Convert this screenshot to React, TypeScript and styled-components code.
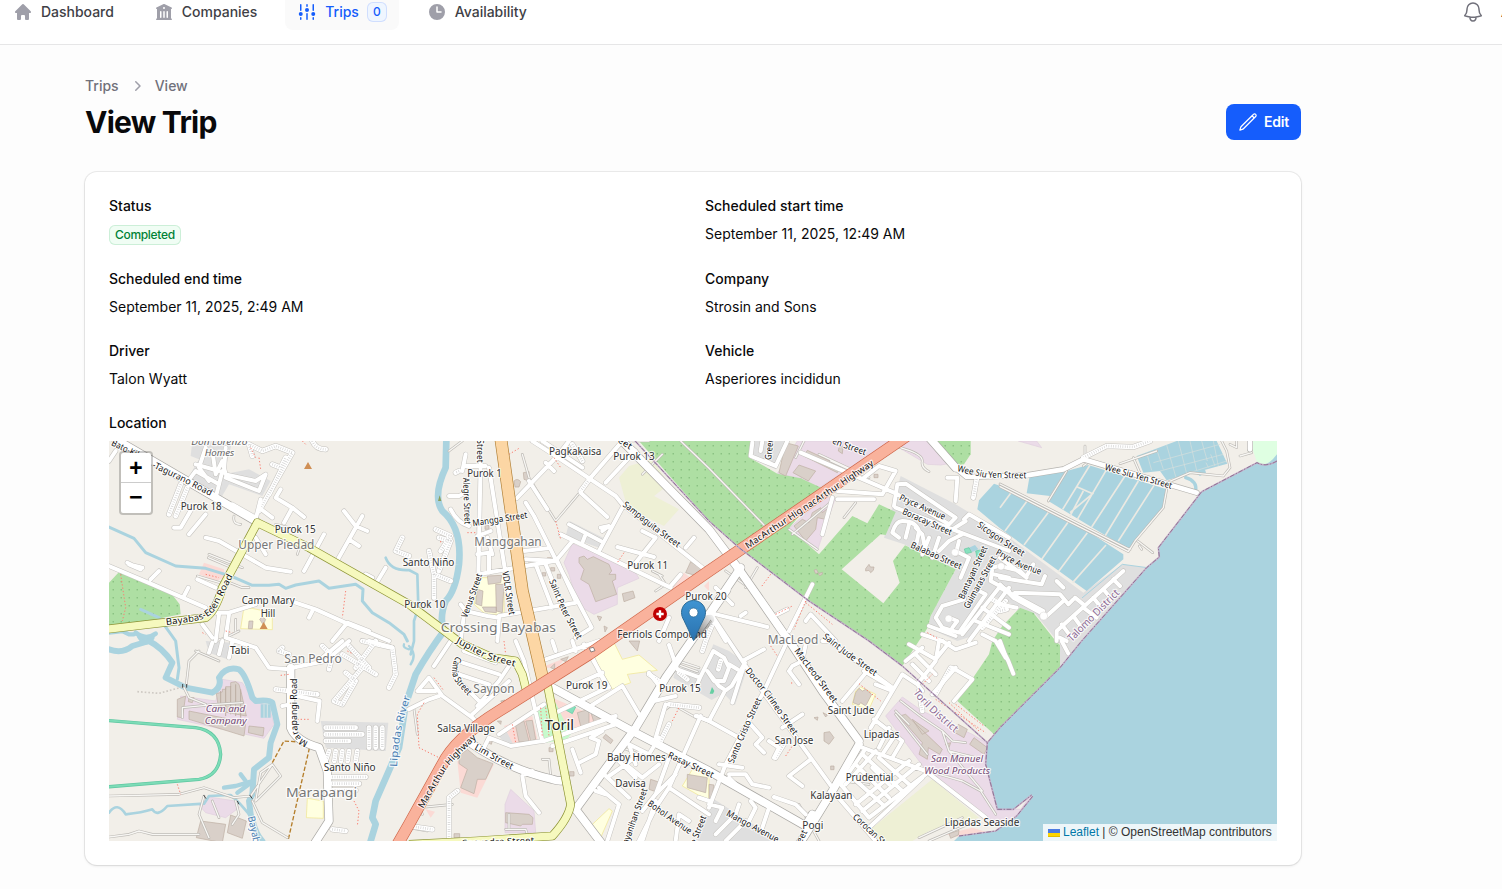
import React from 'react';
import styled, { createGlobalStyle } from 'styled-components';
import {
  HiMiniHome,
  HiMiniBuildingLibrary,
  HiMiniAdjustmentsVertical,
  HiMiniClock,
  HiMiniChevronRight,
  HiOutlineBell,
  HiOutlinePencil,
} from 'react-icons/hi2';

const GlobalStyle = createGlobalStyle`
  * { box-sizing: border-box; }
  body {
    margin: 0;
    background: #fdfdfd;
    font-family: Inter, "Liberation Sans", sans-serif;
    font-size: 14px;
    line-height: 20px;
    color: #09090b;
    overflow: hidden;
  }
`;

const Page = styled.div`
  height: 889px;
  width: 1502px;
  overflow: hidden;
`;

const Topbar = styled.header`
  height: 45px;
  display: flex;
  justify-content: space-between;
  align-items: flex-start;
  background: #fff;
  border-bottom: 1px solid #e6e6e7;
  overflow: hidden;
`;

const Nav = styled.nav`
  display: flex;
  gap: 16px;
  margin: -6px 0 0 1px;
`;

const NavItem = styled.a<{ $active?: boolean }>`
  display: flex;
  align-items: center;
  gap: 8px;
  height: 36px;
  padding: 0 12px;
  border-radius: 8px;
  font-weight: 500;
  letter-spacing: -0.02px;
  white-space: nowrap;
  color: ${(p) => (p.$active ? '#155dfc' : '#3f3f46')};
  background: ${(p) => (p.$active ? '#fafafa' : 'transparent')};
  svg {
    width: 20px;
    height: 20px;
    flex: none;
    color: ${(p) => (p.$active ? '#155dfc' : '#9f9fa9')};
  }
`;

const CountBadge = styled.span`
  width: 20px;
  height: 20px;
  display: flex;
  align-items: center;
  justify-content: center;
  border-radius: 6px;
  font-size: 12px;
  background: #eff6ff;
  box-shadow: inset 0 0 0 1px #d0defe;
`;

const TopbarEnd = styled.div`
  display: flex;
  align-items: center;
  height: 24px;
  width: 41px;
  gap: 16px;
  flex: none;
  overflow: hidden;
  svg {
    width: 24px;
    height: 24px;
    flex: none;
    color: #71717b;
    stroke-width: 1.5;
  }
`;

const Main = styled.main`
  width: 1216px;
  margin: 0 0 0 85px;
  padding-top: 31px;
`;

const Breadcrumbs = styled.div`
  display: flex;
  align-items: center;
  gap: 8px;
  height: 20px;
  font-weight: 500;
  color: #71717b;
  svg {
    width: 20px;
    height: 20px;
    color: #9f9fa9;
  }
`;

const TitleRow = styled.div`
  display: flex;
  align-items: center;
  justify-content: space-between;
  margin-top: 8px;
  height: 36px;
`;

const Title = styled.h1`
  margin: 0;
  font-size: 30px;
  line-height: 36px;
  font-weight: 700;
  letter-spacing: -0.75px;
`;

const EditButton = styled.button`
  display: flex;
  align-items: center;
  gap: 6px;
  width: 75px;
  height: 36px;
  padding: 0 12px;
  border: 0;
  border-radius: 8px;
  background: #155dfc;
  color: #fff;
  font: 600 14px/20px Inter, sans-serif;
  letter-spacing: -0.2px;
  svg {
    width: 20px;
    height: 20px;
    flex: none;
  }
`;

const Card = styled.section`
  margin-top: 32px;
  height: 693px;
  padding: 24px;
  border-radius: 12px;
  background: #fff;
  box-shadow: 0 0 0 1px rgba(9, 9, 11, 0.07), 0 1px 3px rgba(0, 0, 0, 0.1);
`;

const Fields = styled.div`
  display: grid;
  grid-template-columns: 1fr 1fr;
  grid-template-rows: 49px 48px 48px;
  column-gap: 24px;
  row-gap: 24px;
`;

const FieldLabel = styled.div`
  font-weight: 500;
  height: 20px;
`;

const FieldValue = styled.div`
  display: flex;
  align-items: center;
  height: 20px;
  margin-top: 8px;
`;

const StatusBadge = styled.span`
  height: 20px;
  padding: 0 6px;
  margin-top: 2px;
  border-radius: 6px;
  font-size: 12px;
  font-weight: 500;
  letter-spacing: -0.32px;
  color: #008236;
  background: #f0fdf4;
  box-shadow: inset 0 0 0 1px #ccefd8;
`;

const LocationField = styled.div`
  margin-top: 24px;
`;

const MapFrame = styled.div`
  position: relative;
  height: 400px;
  margin-top: 8px;
  overflow: hidden;
  background: #f2efe9;
`;

const MapSvg = styled.svg`
  display: block;
  width: 1168px;
  height: 400px;
  text {
    font-family: "Noto Sans", sans-serif;
    paint-order: stroke;
    stroke: rgba(255, 255, 255, 0.75);
    stroke-width: 7px;
    stroke-linejoin: round;
  }
`;

const ZoomControl = styled.div`
  position: absolute;
  left: 10px;
  top: 10px;
  width: 34px;
  border: 2px solid rgba(0, 0, 0, 0.2);
  border-radius: 4px;
  background: #fff;
  background-clip: padding-box;
`;

const ZoomButton = styled.div`
  height: 29px;
  text-align: center;
  font: bold 23px/35px "Liberation Mono", monospace;
  color: #000;
  & + & {
    border-top: 1px solid #ccc;
    height: 31px;
    line-height: 33px;
  }
`;

const Pin = styled.svg`
  position: absolute;
  left: 572px;
  top: 159px;
  width: 41px;
  height: 41px;
`;

const Attribution = styled.div`
  position: absolute;
  right: 0;
  bottom: 0;
  display: flex;
  align-items: center;
  height: 17px;
  width: 234px;
  padding: 0 5px;
  white-space: pre;
  background: rgba(255, 255, 255, 0.8);
  color: #333;
  font: 12px/17px "Liberation Sans", sans-serif;
  svg {
    width: 12px;
    height: 8px;
    margin-right: 3px;
    flex: none;
  }
  a {
    color: #0078a8;
  }
`;

/* The map is drawn in sheets; each sheet has its own origin in map units. */
type Sheet = 'A' | 'B' | 'C' | 'D' | 'E' | 'F' | 'G' | 'H';
const origin: Record<Sheet, [number, number]> = {
  A: [0, 0], B: [900, 0], C: [1800, 0], D: [2673, 0],
  E: [0, 600], F: [900, 600], G: [1800, 600], H: [2673, 600],
};
const at = (s: Sheet) => `translate(${origin[s][0]} ${origin[s][1]})`;
type Piece = [Sheet, string];

const residential: Piece[] = [
  ['C', 'M575 105L740 190L873 270L1123 455L1240 370L1313 380L1118 600L1053 680V610L980 520L933 500L850 465L790 585L745 600L655 560L665 525L740 385L585 310L525 290Z'],
  ['A', 'M250 0H370L345 100L420 85L485 120L460 165L360 130L325 190L235 115L270 55L245 45Z'],
  ['B', 'M482 240L582 290L575 322L470 285Z'],
  ['G', 'M-97 78L-17 87L13 10L60 30L118 72L78 192L43 157L8 177L-107 110Z'],
  ['G', 'M0 465L210 600H0Z'],
  ['E', 'M635 240L838 245L830 330L650 320Z'],
  ['C', 'M130 0H240L200 85L118 48Z'],
  ['F', 'M290 265L315 310L290 308L268 285ZM880 540L900 510V600H860Z'],
  ['E', 'M290 0L370 5L355 55L300 35Z'],
];
const industrial: Piece[] = [
  ['B', 'M490 308L670 380L690 412L625 440V490L555 520L520 500L495 450L480 400L465 365Z'],
  ['C', 'M265 0H550L330 140L275 112L205 98ZM590 0H655L735 65L695 72L655 70L570 20ZM240 262L350 165L378 175L325 328Z'],
  ['E', 'M340 115L400 125L435 180L480 195L495 250L465 292L205 235L215 165L320 180ZM270 492L300 468L380 480L390 500L350 530L290 515Z'],
  ['F', 'M288 490L305 445L375 510L380 575H288Z'],
  ['G', 'M580 168L640 210L790 280L840 310L830 370L865 505L935 505L965 462L972 466L920 530L895 558L820 530L660 400L530 225Z'],
  ['D', 'M55 0H110L125 20Z'],
];
const forest: Piece[] = [
  ['C', 'M-210 0H125L118 48L205 98L275 112L340 142L240 262L330 340L430 225L475 247L510 190L560 213L530 282L515 280L398 385L523 487L572 425L552 360L588 313L740 385L665 525L655 562L580 675L480 600L300 480L90 320L0 240Z'],
  ['C', 'M675 0H785V40L765 70L740 75Z'],
  ['C', 'M933 500L973 515L1040 600L1053 612V680L855 880L745 780L840 640L850 600L880 555Z'],
  ['A', 'M30 393L185 455L212 490L215 520L140 535L0 578V425Z'],
];
const farmland: Piece[] = [
  ['B', 'M660 75L730 55L780 130L735 165L810 205L765 255L655 200L630 110Z'],
  ['G', 'M670 415L810 530L660 570L610 600H510L485 565Z'],
];
const school: Piece[] = [
  ['A', 'M405 497L490 515V566L395 563Z'],
  ['B', 'M215 410H285V520H230L195 490Z'],
  ['E', 'M595 472L643 480V532L592 530Z'],
  ['F', 'M555 50L615 5L640 55L690 42L745 88L655 100L665 125L610 145ZM545 555L600 503L610 510L575 590ZM820 435L850 385L900 400V480Z'],
  ['G', 'M440 150L455 138L500 160L480 205L430 190Z'],
];
const retail: Piece[] = [
  ['A', 'M285 365L345 385V410L320 420L270 400Z'],
  ['B', 'M785 445L825 395L850 415L800 445ZM885 435L900 420V450Z'],
  ['F', 'M285 255L370 225L388 308H312L300 285ZM430 170L580 235L480 280ZM395 80L470 50L445 80ZM145 360L255 370L205 470L155 455ZM50 505L78 512L65 530Z'],
  ['G', 'M710 580L790 560L840 575L770 592Z'],
];
const buildings: Piece[] = [
  ['A', 'M420 540H432L430 563H418ZM452 535L460 528L470 535L463 552Z'],
  ['B', 'M510 350L525 345L535 355L553 347L600 370L608 390L600 400H620V415L610 420L623 460L560 482L540 430L515 415L525 385L510 365ZM640 458L672 450L678 470L645 482ZM845 362L880 385L865 405L830 395ZM315 120Q325 110 335 122L330 138H318ZM343 95L360 92V120L345 115ZM235 405L278 403L275 425L238 430ZM205 445L222 450L218 495L200 488ZM260 430H285L280 515L262 510ZM220 498H262V515L228 512ZM205 260H217V268H205ZM228 253H240V265H228ZM357 352H367V363H357ZM382 358H394V369H382ZM415 350H427V361H415ZM425 380H437V390H425ZM400 395H410V405H400ZM445 400H455V412H445ZM565 525L578 528L572 540ZM585 555L595 560L588 573Z'],
  ['C', 'M230 5L268 15L230 105L210 95ZM295 28L395 75L385 95L285 45ZM270 72L320 90L298 120L252 95ZM255 255L280 235L300 245L310 215L335 200L340 215L365 195L350 235L325 230L320 265L290 300ZM390 20L402 15L400 38L388 30ZM495 100H507V110H495ZM470 383L480 370L484 378L495 378L493 388L485 395L480 388L470 390ZM315 388L322 385L328 395L320 398ZM328 398L340 394V400L332 404ZM87 402L98 402L95 415Z'],
  ['E', 'M205 175L230 165L220 230L205 228ZM322 158L340 153V145H350V137H365V125L380 122L390 130L398 160L412 225L330 210ZM240 210L350 232L410 248L405 285L340 265L240 235ZM420 255L465 260L462 285L418 275ZM275 540L350 550L340 605L262 590ZM365 522L412 540L400 592L355 575ZM240 170H255L250 185L238 182Z'],
  ['F', 'M150 345L175 325L205 350L252 368L230 415H205L195 458L155 440L175 385L150 368ZM290 515L360 520L372 530L370 550H340L335 555L290 545ZM320 255L345 240L360 300L330 303ZM350 240L370 238L380 295L365 300ZM505 215L540 205V250L515 255ZM545 212L575 235L555 245ZM725 415L755 425L748 455L720 445ZM835 400L895 410L890 455L835 440ZM590 280L612 298L605 308L582 290ZM275 180L288 177L287 192ZM425 80L437 68V85ZM455 55L478 47L470 62ZM265 240H277L275 250ZM233 290L250 300L247 310L228 300ZM135 578H152V590H135ZM420 320H432V332H420ZM482 392H495V405H482ZM660 0H692L685 30Z'],
  ['G', 'M570 225L590 220L700 325L692 340L658 320L655 355L630 340L640 305ZM610 235L660 270L640 280ZM748 250L775 265L765 290L738 275ZM795 290L835 320L825 340L782 310ZM345 275L362 272L375 290L360 310L345 300ZM315 230L327 228L325 238ZM342 215L355 222L350 228ZM365 375H375V386H365ZM440 155L450 142L460 150L470 145L488 160L470 195L455 185L450 192L432 185ZM0 430L15 432L8 470L0 475ZM708 310L725 305L720 320ZM720 578L750 568L748 582L725 592Z'],
];
const ponds = 'M-18 128L30 145L270 275L370 340V355L260 450L0 262L-68 205L-63 178ZM90 98L195 92L150 165L80 157ZM200 90L265 72L500 145L490 200L385 325L145 180ZM410 45L530 0H650L682 68L500 118L480 90L430 95ZM570 85L610 68L618 95L600 105Z';
const pondLines = 'M37 150L0 200M85 175L15 270M148 210L72 312M205 242L125 355M262 275L175 392M318 312L218 425M270 72L188 205M232 138L278 158L210 215M320 85L232 235M250 150L210 225M375 105L275 258M415 120L315 285M462 133L355 300';
const pondLinesFine = 'M440 35L455 88M470 25L490 85M500 12L528 110M535 0L560 98M570 0L590 88M605 0L622 60M640 0L655 75M460 65L660 10M480 90L670 40M560 98L680 60M632 40L645 75M618 65L625 80';

const rivers: { d: string; w: number }[] = [
  { d: 'M0 258L75 292L110 335L200 375L290 382L370 407L430 433H480L510 430L530 442L560 432L630 420L660 442L740 430L762 445L760 480L790 515L840 545L885 580L895 600', w: 9 },
  { d: 'M830 350Q845 390 900 387L925 400L928 500L915 540V600L905 640', w: 8 },
  { d: 'M95 505L150 530L200 600L210 680L205 715', w: 9 },
  { d: 'M0 575L40 570L60 580H75', w: 13 },
  { d: 'M80 575Q110 600 140 578M90 585Q110 620 130 590', w: 14 },
  { d: 'M0 625Q40 640 70 615L120 600Q160 620 190 665L170 710L230 740L310 755Q340 740 330 710Q350 675 390 685Q410 700 430 770L440 780Q480 775 490 785L505 850L485 905L480 950L435 985L430 1060L420 1080L425 1120L430 1135Q440 1180 460 1200', w: 18 },
  { d: 'M0 1115Q25 1080 50 1120Q100 1115 130 1105Q145 1130 175 1095L285 1088L300 1065L365 1062L390 1085L425 1125', w: 8 },
  { d: 'M395 1000L410 1020M345 1040L380 1035L425 1022M385 1055L420 1030', w: 13 },
  { d: 'M1012 0L1010 80Q970 165 1000 210Q1060 260 1050 370Q1040 450 1010 480Q990 530 1005 570Q960 630 920 700L890 790L870 920L800 1080L790 1130L800 1150L785 1200', w: 20 },
  { d: 'M900 615Q925 640 905 670M885 610Q880 620 900 625', w: 7 },
  { d: 'M3230 110Q3265 120 3260 150', w: 10 },
  { d: 'M3115 380L3040 370L2920 470', w: 3 },
];

const thin: Piece[] = [
  ['A', 'M300 340L400 380M298 350L380 385M375 225Q370 250 395 250M265 405L350 430M350 420L400 440L420 440M380 535V570M390 570L350 590L320 600M565 340L575 310M540 260L500 250'],
  ['B', 'M340 40L360 110L415 200L440 240L512 155M640 0L720 0M700 100L760 40M750 400L770 430L740 450M730 390L760 405M160 0L120 30'],
  ['C', 'M-85 0L0 82L165 252M260 50L285 0M365 60L430 90M330 40L480 110M240 265L325 325M250 280L370 180M405 230L440 185M590 25Q640 40 640 60Q635 80 660 92M560 15L590 25M50 390L120 440M110 440L145 380'],
  ['D', 'M0 137L385 332L405 300L490 200L500 145M0 129L390 326M145 180L200 90M360 68L470 30M400 50L430 120M255 15V50M500 125L570 95L670 105L690 80L680 30L665 0M690 10L710 20V0M720 45L755 35M413 300L458 335M418 315L425 325M270 60L250 75'],
  ['E', 'M0 465L210 460L285 440L375 470L425 465L490 370L515 405L440 480L455 395L490 370M430 480L460 545L535 590M285 465L270 520L300 590M310 480L330 530M0 588L60 580L90 570L130 580H270M232 130L240 60L270 30M225 140L240 170L290 190M220 230V200L320 190L400 185M260 30L330 60M380 480L390 520L370 550'],
  ['F', 'M400 355H420L425 405M30 500L130 490M30 495L40 520M290 565H350L355 580M55 570L0 560M800 57L870 80M805 70L865 92M770 205L790 190L870 235M15 205L25 280M300 520V560M640 320L690 340'],
  ['G', 'M575 180L640 230L700 270L720 330L820 450M560 210L600 250M690 400L760 420L815 450L860 520M720 330L800 350M700 270L730 300L770 305M630 590L760 530M660 600L800 540M270 490L330 600M560 220L655 340M480 430L400 420'],
];
const minor: Piece[] = [
  ['A', 'M0 375L130 430L290 500M320 515H360L440 490M545 480L620 505L720 550L840 600M290 290L330 300L470 380L545 392M585 390L645 280M685 358L760 225M705 210L740 255L775 270M720 295L750 315M440 235L455 175M450 200L490 230M515 145L500 170L550 200L585 228M550 200L525 245M55 365L95 385L60 370L100 380M125 415L150 390M225 465L238 440M265 415L320 440M195 260H215L250 200M240 280L290 220M0 60L20 30M330 520L320 600M360 520L350 590L380 600M280 550L310 590M670 600L715 545L780 570M770 400L790 410M800 430L830 380M290 20L270 80L300 120M310 30L320 100L340 60L350 100L440 120L470 100L450 150L350 110M260 70L330 90M245 110L260 90L330 130M340 90L320 170M350 20L345 90M370 190L440 230M610 510L600 530M440 290L470 340'],
  ['B', 'M215 60L208 400M240 80L290 400L305 480M165 75H230M170 40L160 90M120 165H150L160 160M125 205Q145 245 180 255M208 400L435 360M323 172L445 45L480 0M370 0L440 45L620 165L640 190L830 340L880 380M350 185L375 225L440 355L548 560L500 590M360 120L415 205M400 0L520 80M480 0L450 40M410 65L435 90M515 155L595 228M545 110L640 0M570 330L640 200M590 125L660 50M575 260L600 255L580 270M490 300L440 360L350 355M455 280L785 440M480 250L575 300M530 280L520 305M345 330L415 322M380 370L430 500M410 370L455 480M445 360L500 480M270 525L500 485M155 490L170 510L235 525L270 530L265 600M165 520L155 600M250 340L235 290M205 340L240 335M240 395V340M625 318L735 348M700 270L740 290M680 365L740 290M830 320L855 290M785 435L815 400M245 270L205 285M640 0L680 30M780 530L750 600M360 500L375 600'],
  ['C', 'M130 5L125 45L200 75L235 0M160 0L155 30M200 75L170 60M275 35L555 155M465 110L510 75L560 90L520 160L385 150M370 170L340 280M385 175H495M715 110H745L740 180M555 195L565 130L590 128L740 230L720 250L565 160M560 200L900 330M765 235L780 220L900 290M730 265L770 240M570 290L550 275Q560 240 580 240Q620 240 630 270L620 320M590 290L600 250M640 340L660 290M670 350L690 290M620 260L640 280L650 330M750 300L740 340M740 330L780 350L755 410M690 330L720 300L760 280M765 475L700 495L680 530L700 560L750 575L830 460L800 445M730 560L745 540L720 530M870 375L850 380L845 420L900 450M855 400L900 410M240 570L310 430M205 520L235 505M290 540L305 520L380 600M0 515L175 558M0 515L50 600M95 525L110 515M20 440L70 490M760 580L870 440M780 600L900 440M800 540L900 580M820 500L900 560M640 580L700 600M660 555L740 585'],
  ['D', 'M0 350L80 410L60 390L0 375M80 405L100 370M0 410L125 430L135 405M40 470L45 455L180 460L205 490L220 475M40 470L140 525L190 480M0 440L130 510M170 600V570L370 390M180 590L200 600M185 550L215 590M220 525L245 560M250 500L290 530M280 470L300 495M310 445L335 475M340 415L360 435M0 490L50 500M225 470L250 490M0 430L40 470M170 420L190 440'],
  ['E', 'M310 5L300 35M340 0L330 40M370 0L360 50M380 0L440 20L480 80L540 85M550 80L650 60L720 0M640 50L700 0M780 0L850 20M565 165L632 180L625 240M520 195L545 190'],
  ['F', 'M0 205L60 175L90 165M25 150H80M30 145L60 110L100 165L190 230L205 245M75 75L125 0M165 30L260 65M160 65L270 100M150 100L240 130M190 220L300 120M220 190L140 110M205 195L270 120L300 75M320 0L345 60L400 300L305 315L240 290L220 330M270 280L405 190M405 300L620 225M430 315L620 250M410 55L570 0M430 0L440 30M550 50L595 140L430 220M480 140L580 95M545 195L640 135L690 220M490 0L500 30M525 10L600 140M340 405L350 465L390 515M350 400L370 390M490 325L515 395M510 365L560 340L570 300L545 290L580 270M580 395L660 470M600 405L650 370L700 410L750 370M570 440L630 490L595 600M560 450L590 460M650 370L700 330M630 360L680 410M700 510L740 460L800 400M740 480L700 600M780 440L900 520M770 190L740 290M875 225L780 440M720 95L755 140M900 240L865 225M735 180L800 165M780 350L740 460M750 290L720 340L660 310L680 370M840 540L810 520L800 600M690 600L740 500L780 440M870 470L900 480'],
  ['G', 'M8 -78L60 0L160 150L305 350L370 440M235 0L165 150L50 370L0 500M-120 12L-95 85L-27 110L13 30L45 50L60 80L45 120H15L-5 90L30 135L50 148L68 135L108 65L70 185M-27 110L-42 145M100 60L165 25M85 85L60 70M45 155L0 240L-40 225M0 240L90 290M125 250L160 290L140 310L165 335M180 300L210 320L195 350M220 260L280 220M305 355L240 405L280 435M195 468L260 490L290 520M240 90L270 130M240 90L250 75L280 60L290 10M485 260L580 100L625 130L640 150M625 130L680 60L690 0M400 180L475 90M465 90L550 140M500 130L550 150M700 0L740 25L800 5M600 10L680 55L720 5M620 40L680 100M610 70L660 120M640 20L590 60M730 80L790 115L735 180M670 160L740 80M460 320L650 390L830 530M465 330L395 430L480 530L650 400M490 380L540 430M510 350L600 430M420 400L520 490M440 370L540 470M460 340L580 450M440 490L600 360M460 510L630 370M410 430L500 330M495 235L580 300L550 350M540 260L510 320M560 280L520 340M380 460L500 600M480 560L640 410M30 370L100 380M60 400L110 400L130 430L180 440M90 440L60 410M125 480L140 500L120 540M180 500L160 560M90 490L80 520M50 600L110 540M0 490L40 500L20 540M20 580L70 530M340 0L360 0L550 140M860 0L890 50M820 -20L860 0'],
  ['H', 'M0 0L15 40L25 60L40 98M185 0L205 38'],
];
const unpaved: Piece[] = [
  ['A', 'M450 210L550 35L500 15L460 30L420 10L430 45M490 70L515 80L530 50M215 130L180 220M235 140L200 225M610 0Q620 25 650 25M880 290L860 330L900 345M530 60L480 160'],
  ['B', 'M545 110L515 150M80 265L125 285L95 330M60 330L75 400L125 420M75 400L75 470M90 290L125 300L90 390M150 90L140 95M520 60L490 10'],
  ['C', 'M803 115L793 170M890 480L820 560M850 475L890 500'],
  ['D', 'M250 50L320 15L400 18L450 0M0 510L20 505'],
  ['E', 'M520 20L510 30L540 40M500 145L625 160M710 95L740 120L700 190L675 180L760 80M640 15L670 45L660 85M760 0L850 20L860 100L840 140M800 0L740 80M700 40L800 100M720 15L780 80M650 260H740M650 280H760M650 300H720M780 260V320M800 260V320M820 260V320M660 330L650 360M680 330L676 360M700 330L696 360M720 330L716 360M745 330L740 360M670 408H770M670 428H750M670 448H740M670 565L710 570'],
  ['F', 'M145 450L120 470V600M0 555L70 565M780 250L750 310M870 200L780 190M720 100L750 120'],
  ['G', 'M725 80L680 160M230 300L200 350M630 150L640 210M35 60L28 85M10 -50L-10 0L-20 30M-90 95L-65 115'],
];
const major: Piece[] = [
  ['A', 'M20 -5L440 240'],
  ['B', 'M640 0L900 265L990 385L1140 600'],
  ['F', 'M430 140L660 265L900 390L1190 555L1210 520M953 -153L770 110L680 260L500 505L580 610M190 310Q300 385 430 415Q450 422 470 418'],
  ['G', 'M235 -10L340 150L450 300M450 310L370 450L290 580L270 610'],
  ['C', 'M665 -5L740 80'],
  ['E', 'M545 80V260Q560 300 630 320L655 390L660 540L615 610'],
  ['C', 'M0 520L95 380'],
];
const medium: Piece[] = [
  ['D', 'M-140 75L-100 108L80 103L190 85L250 55L590 155M750 0V25'],
];
const secondary = 'M-10 565L290 530Q320 510 340 440L445 245L600 320L900 490L1060 610L1150 650L1220 660L1240 700L1255 760M1315 730L1385 1090Q1380 1130 1330 1185L1100 1200L900 1210';
const primary = 'M1175 -10L1240 450L1305 730';
const trunk = 'M2400 -20L1800 390L1440 640L1170 810Q1040 890 1000 970L900 1150L860 1220';
const footways: Piece[] = [
  ['A', 'M35 400L50 500L40 540M450 50L455 85M425 20L440 50M710 450L700 530M350 570L370 575M290 400L330 410M280 575L290 580M580 0L590 10'],
  ['B', 'M300 40L330 22M435 50L455 80M440 240L455 295M645 335L625 365M175 275H200M95 300V310'],
  ['C', 'M185 400L155 440M290 480L255 565M290 485L370 550M200 520L250 495M655 575L690 595'],
  ['E', 'M515 103L540 100M565 235H600M205 430L215 460M735 480L750 510L745 555M715 30L730 38'],
  ['F', 'M45 185L25 220L30 320L90 350M75 110L105 150M285 0L290 40M395 200L400 290M410 200L420 285M790 240L810 200M310 250L320 305'],
  ['G', 'M185 15L205 45M230 345L250 315M450 128L515 180M640 130L670 100M680 175L830 275M720 185L810 270M740 190L825 255M248 124V132'],
];
const districtLine = 'M3504 60Q3470 80 3444 65L3278 152L3148 320L3151 348L3113 380L2918 600L2853 680L2673 860L2635 905L2630 970L2665 1105H2713L2768 1062M2771 1066L2723 1125L2660 1170L2550 1185M1560 -20L1800 240L1890 320L2100 480L2280 600L2380 675L2635 905';

const Shapes = ({ items, fill, stroke, w = 2 }: { items: Piece[]; fill: string; stroke?: string; w?: number }) => (
  <>
    {items.map(([s, d], i) => (
      <path key={i} d={d} transform={at(s)} fill={fill} stroke={stroke} strokeWidth={w} />
    ))}
  </>
);

const Lines = ({ items, color, w, dash }: { items: Piece[]; color: string; w: number; dash?: string }) => (
  <g fill="none" stroke={color} strokeWidth={w} strokeDasharray={dash} strokeLinecap={dash ? 'butt' : 'round'} strokeLinejoin="round">
    {items.map(([s, d], i) => (
      <path key={i} d={d} transform={at(s)} />
    ))}
  </g>
);

/* sheet, left, right, baseline, font size, colour, text, italic */
type Place = [Sheet, number, number, number, number, string, string, boolean?];
const ink = '#333';
const soft = '#777';
const places: Place[] = [
  ['A', 247, 415, 10, 27, '#666', 'Don Lorenzo', true],
  ['A', 287, 376, 44, 27, '#666', 'Homes', true],
  ['A', 215, 338, 206, 30, ink, 'Purok 18'],
  ['A', 497, 620, 273, 30, ink, 'Purok 15'],
  ['A', 388, 616, 322, 36, soft, 'Upper Piedad'],
  ['A', 398, 557, 486, 30, ink, 'Camp Mary'],
  ['A', 455, 499, 525, 30, ink, 'Hill'],
  ['A', 881, 1036, 374, 30, ink, 'Santo Niño'],
  ['A', 886, 1009, 498, 30, ink, 'Purok 10'],
  ['B', 420, 577, 41, 30, ink, 'Pagkakaisa'],
  ['B', 613, 737, 55, 30, ink, 'Purok 13'],
  ['B', 175, 278, 107, 30, ink, 'Purok 1'],
  ['B', 196, 398, 312, 36, soft, 'Manggahan'],
  ['B', 655, 777, 383, 30, ink, 'Purok 11'],
  ['B', 829, 953, 476, 30, ink, 'Purok 20'],
  ['B', 95, 441, 570, 40, soft, 'Crossing Bayabas'],
  ['B', 625, 894, 589, 30, ink, 'Ferriols Compound'],
  ['G', 176, 328, 6, 36, soft, 'MacLeod'],
  ['E', 363, 421, 37, 30, ink, 'Tabi'],
  ['E', 526, 698, 64, 36, soft, 'San Pedro'],
  ['E', 290, 409, 210, 27, '#734a75', 'Cam and', true],
  ['E', 287, 413, 246, 27, '#734a75', 'Company', true],
  ['E', 644, 800, 387, 30, ink, 'Santo Niño'],
  ['E', 531, 744, 465, 40, soft, 'Marapangi'],
  ['F', 193, 317, 155, 36, soft, 'Saypon'],
  ['F', 471, 595, 143, 30, ink, 'Purok 19'],
  ['F', 751, 875, 151, 30, ink, 'Purok 15'],
  ['F', 407, 495, 264, 42, '#222', 'Toril'],
  ['F', 85, 258, 271, 30, ink, 'Salsa Village'],
  ['F', 594, 770, 357, 30, ink, 'Baby Homes'],
  ['F', 619, 710, 437, 30, ink, 'Davisa'],
  ['G', 356, 496, 217, 30, ink, 'Saint Jude'],
  ['G', 464, 571, 288, 30, ink, 'Lipadas'],
  ['G', 197, 313, 307, 30, ink, 'San Jose'],
  ['G', 410, 553, 417, 30, ink, 'Prudential'],
  ['G', 304, 430, 472, 30, ink, 'Kalayaan'],
  ['G', 280, 343, 562, 30, ink, 'Pogi'],
  ['G', 666, 822, 360, 28, '#734a75', 'San Manuel', true],
  ['G', 646, 843, 396, 28, '#734a75', 'Wood Products', true],
  ['G', 707, 931, 552, 30, ink, 'Lipadas Seaside'],
];

/* sheet, baseline path, length, text, colour, size */
type Street = [Sheet, string, number, string, string?, number?];
const streets: Street[] = [
  ['A', 'M5 12L130 72', 88, 'Bato-Kil'],
  ['A', 'M128 78L220 122L330 178', 196, '-Tagurano Road'],
  ['A', 'M172 552L255 541Q308 530 324 497L394 360', 272, 'Bayabas-Eden Road'],
  ['B', 'M204 -5V90', 70, 'Street'],
  ['B', 'M162 110L168 280', 140, 'Alegre Street'],
  ['B', 'M192 256L400 224', 166, 'Mangga Street'],
  ['B', 'M640 194L720 258L840 345', 208, 'Sampaguita Street'],
  ['B', 'M280 392L306 560', 132, 'VDLR Street'],
  ['B', 'M174 532L224 390', 138, 'Venus Street'],
  ['B', 'M420 420L455 505L520 625', 196, 'Saint Peter Street'],
  ['B', 'M625 2L700 50', 44, 'eet'],
  ['F', 'M140 4L225 50L360 90', 192, 'Jupiter Street'],
  ['C', 'M116 324L380 148', 200, 'MacArthur Hig'],
  ['C', 'M288 210L560 28', 250, 'nacArthur Highway'],
  ['C', 'M368 7L520 62', 106, 'en Street'],
  ['C', 'M186 58L200 -60', 86, 'Green S'],
  ['C', 'M744 91L830 110L1050 114', 210, 'Wee Siu Yen Street'],
  ['C', 'M569 176L760 262', 148, 'Pryce Avenue'],
  ['C', 'M578 218L780 308', 160, 'Boracay Street'],
  ['C', 'M603 319L800 406', 164, 'Balabao Street'],
  ['C', 'M764 476L850 290', 172, 'Bantayan Street'],
  ['C', 'M779 505L880 320', 174, 'Guimaras Street'],
  ['C', 'M803 256L870 303L980 372', 164, 'Sicogon Street'],
  ['D', 'M-14 340L60 380L190 426', 148, 'Pryce Avenue'],
  ['D', 'M313 86L600 168', 208, 'Wee Siu Yen Street'],
  ['D', 'M215 604L402 415', 206, 'Talomo District', '#8d6a94', 31],
  ['E', 'M598 302Q563 290 565 255V60', 205, 'Marapangi Road'],
  ['E', 'M864 378Q868 260 917 130', 215, 'Lipadas River', '#4d80b3', 30],
  ['E', 'M416 528L450 680', 110, 'Bayabas', '#4d80b3', 30],
  ['F', 'M143 45Q115 90 145 130L210 200', 138, 'Camia Street'],
  ['F', 'M195 324L380 426', 128, 'Lim Street'],
  ['F', 'M42 503L105 395Q130 355 260 240', 268, 'MacArthur Highway'],
  ['F', 'M160 616L420 605', 216, 'Saavedra Street'],
  ['F', 'M775 349L950 430', 148, 'Rasay Street'],
  ['F', 'M652 625L732 400', 190, 'Bayanihan Street'],
  ['F', 'M714 492L880 608', 154, 'Bohol Avenue'],
  ['F', 'M860 612L907 490', 90, 'e Street'],
  ['G', 'M255 30L330 130L420 250', 196, 'MacLeod Street'],
  ['G', 'M340 -10L420 52L560 150', 195, 'Saint Jude Street'],
  ['G', 'M108 90L175 172L290 336', 242, 'Doctor Cirineo Street'],
  ['G', 'M74 368Q107 280 180 130', 210, 'Santo Cristo Street'],
  ['G', 'M612 154Q640 200 800 327', 175, 'Toril District', '#8d6a94', 31],
  ['G', 'M50 523L240 624', 174, 'Mango Avenue'],
  ['G', 'M430 530L560 650', 120, 'Corocan St'],
  ['G', 'M277 608L312 540', 40, 'eet'],
];

const TownMap = () => (
  <MapSvg viewBox="0 0 3504 1200">
    <defs>
      <pattern id="trees" width="24" height="24" patternUnits="userSpaceOnUse">
        <rect x="11" y="13" width="3" height="3" fill="#5d9c5a" />
      </pattern>
    </defs>
    <rect width="3504" height="1200" fill="#f2efe9" />
    <Shapes items={residential} fill="#dfdfdf" />
    <Shapes items={farmland} fill="#eef0d5" />
    <Shapes items={industrial} fill="#ebdbe8" stroke="#e0cede" />
    <Shapes items={retail} fill="#fbdad5" />
    <Shapes items={forest} fill="#aedfa3" />
    <Shapes items={forest} fill="url(#trees)" />
    <path d="M3423 0H3504V50L3475 75L3444 65Z" fill="#dfffe2" />
    <path d="M1285 800L1340 785L1385 880L1375 895L1310 905L1290 860Z" fill="#c8facc" />
    <path d="M1380 790L1400 798L1390 818L1372 808Z" fill="#88e0be" stroke="#5ec9a0" strokeWidth="2" />
    <Shapes items={school} fill="#ffffe0" stroke="#f0e68c" />
    <path d="M3504 40Q3470 85 3444 65L3278 152L3148 320L3151 348L3113 380L2918 600L2853 680L2673 860L2635 905L2630 970L2665 1105H2713L2768 1062L2771 1066L2723 1125L2660 1170L2550 1185L2535 1200H3504Z" fill="#aad3df" />
    <path d={ponds} transform={at('D')} fill="#aad3df" />
    <path d={pondLines} transform={at('D')} fill="none" stroke="#ebe9e2" strokeWidth="5" />
    <path d={pondLinesFine} transform={at('D')} fill="none" stroke="#d8dfdd" strokeWidth="2" />
    <path d="M455 790H485V830H455ZM2580 320L2598 312L2608 325L2590 333Z" fill="#aad3df" />
    <path d="M2566 324L2580 320L2588 334L2570 338ZM2600 330L2618 326L2615 348L2604 350Z" fill="#88e0be" stroke="#5ec9a0" strokeWidth="2" />
    <g fill="none" stroke="#aad3df" strokeLinecap="round" strokeLinejoin="round">
      {rivers.map((r, i) => <path key={i} d={r.d} strokeWidth={r.w} />)}
    </g>
    <path d="M465 790V830M475 790V830" stroke="#f2efe9" strokeWidth="2" />
    <Shapes items={buildings} fill="#d9d0c9" stroke="#bcaea2" />
    <path d="M335 150V210M350 140V225M365 135V220M380 130V225M395 145V230" transform="translate(0 600)" stroke="#bcaea2" strokeWidth="3" />
    <g fill="none">
      <path d="M-10 838L260 860Q330 870 335 940Q330 1005 270 1015L-10 1038" stroke="#5dc6a0" strokeWidth="10" />
      <path d="M-10 838L260 860Q330 870 335 940Q330 1005 270 1015L-10 1038" stroke="#7ddcb7" strokeWidth="6" />
      <path d="M490 965L525 900L605 905L538 1195" stroke="#b57e2b" strokeWidth="4" strokeDasharray="13 6" />
    </g>
    <path d="M85 752L150 757L220 738" fill="none" stroke="#cfcac4" strokeWidth="5" strokeDasharray="5 6" />
    <Lines items={thin} color="#bdbab5" w={8} />
    <Lines items={thin} color="#f8f7f4" w={4} />
    <Lines items={unpaved} color="#c4c2be" w={17} />
    <Lines items={minor} color="#c5c3bf" w={15} />
    <Lines items={medium} color="#b5b3af" w={18} />
    <Lines items={major} color="#aaa8a4" w={27} />
    <Lines items={unpaved} color="#fff" w={14} />
    <Lines items={unpaved} color="#d2d2d2" w={8} dash="2 5" />
    <Lines items={minor} color="#fff" w={12} />
    <Lines items={medium} color="#fff" w={14} />
    <Lines items={major} color="#fff" w={23} />
    <g fill="#fff" stroke="#c5c3bf" strokeWidth="1">
      <circle cx="2538" cy="334" r="11" /><circle cx="2519" cy="533" r="11" />
      <circle cx="2804" cy="525" r="12" /><circle cx="2676" cy="376" r="11" />
    </g>
    <path d="M1809 738L1816 750L1812 758H1802Z" fill="#66cfa3" />
    <Lines items={footways} color="#fa8072" w={3} dash="4 6" />
    <g fill="none" strokeLinejoin="round">
      <path d={secondary} stroke="#8c9334" strokeWidth="26" />
      <path d={secondary} stroke="#f6f9be" strokeWidth="22" />
      <path d={primary} stroke="#b18037" strokeWidth="38" />
      <path d={primary} stroke="#fcd6a4" strokeWidth="34" />
      <path d={trunk} stroke="#cf6649" strokeWidth="36" />
      <path d={trunk} stroke="#f9b29c" strokeWidth="32" />
      <path d={districtLine} stroke="#c4b0c9" strokeWidth="5" />
      <path d={districtLine} stroke="#8f7395" strokeWidth="3" strokeDasharray="14 5 4 5" />
    </g>
    <path d="M597 63L609 84H585ZM464 543L476 564H452Z" fill="#d08f55" />
    <path d="M992 163L997 180H987Z" fill="#8c9f5a" />
    <path d="M1441 622L1453 619L1458 629L1446 633Z" fill="#fff" stroke="#555" strokeWidth="2" />
    <path d="M221 729V740M233 729V740M284 1062L291 1073M422 1062L430 1073M385 1080L390 1090" stroke="#444" strokeWidth="3" />
    {streets.map(([s, d, len, text, color, size], i) => (
      <g key={i} transform={at(s)}>
        <path id={`way${i}`} d={d} fill="none" />
        <text fontSize={size ?? 27} fill={color ?? '#111'} textLength={len} lengthAdjust="spacingAndGlyphs">
          <textPath href={`#way${i}`} textLength={len} lengthAdjust="spacingAndGlyphs">{text}</textPath>
        </text>
      </g>
    ))}
    {places.map(([s, x, x2, y, size, color, text, italic], i) => (
      <text
        key={i}
        transform={at(s)}
        x={x}
        y={y + 2}
        fontSize={size}
        fill={color}
        fontStyle={italic ? 'italic' : 'normal'}
        textLength={x2 - x}
        lengthAdjust="spacingAndGlyphs"
      >
        {text}
      </text>
    ))}
    <circle cx="1653" cy="519" r="21" fill="#bf0000" />
    <path d="M1653 508V530M1642 519H1664" stroke="#fff" strokeWidth="7" />
  </MapSvg>
);

const MarkerPin = () => (
  <Pin viewBox="0 0 41 41">
    <defs>
      <linearGradient id="pinFill" x1="0" y1="0" x2="0" y2="1">
        <stop offset="0" stopColor="#3f94d2" />
        <stop offset="1" stopColor="#2a72af" />
      </linearGradient>
      <linearGradient id="pinShade" x1="0" y1="1" x2="1" y2="0">
        <stop offset="0" stopColor="#000" stopOpacity="0.6" />
        <stop offset="1" stopColor="#000" stopOpacity="0.03" />
      </linearGradient>
    </defs>
    <path d="M12.5 41L20 20Q24 14 31 15Q36 19 30 25Z" fill="url(#pinShade)" />
    <path d="M12.5 .5C5.8.5.5 5.8.5 12.5c0 3 1 5.3 2.4 7.8L12.5 40.5l9.600-20.200c1.400-2.500 2.400-4.800 2.400-7.800C24.500 5.800 19.200.5 12.500.5z" fill="url(#pinFill)" stroke="#2e6c97" />
    <circle cx="12.500" cy="12.500" r="4.500" fill="#fff" stroke="#2e6c97" strokeWidth="0.800" />
  </Pin>
);

const Field = ({ label, children }: { label: string; children: React.ReactNode }) => (
  <div>
    <FieldLabel>{label}</FieldLabel>
    <FieldValue>{children}</FieldValue>
  </div>
);

export default function App() {
  return (
    <Page>
      <GlobalStyle />
      <Topbar>
        <Nav>
          <NavItem><HiMiniHome />Dashboard</NavItem>
          <NavItem><HiMiniBuildingLibrary />Companies</NavItem>
          <NavItem $active><HiMiniAdjustmentsVertical />Trips<CountBadge>0</CountBadge></NavItem>
          <NavItem><HiMiniClock />Availability</NavItem>
        </Nav>
        <TopbarEnd><HiOutlineBell />A</TopbarEnd>
      </Topbar>
      <Main>
        <Breadcrumbs>
          <span>Trips</span>
          <HiMiniChevronRight />
          <span>View</span>
        </Breadcrumbs>
        <TitleRow>
          <Title>View Trip</Title>
          <EditButton><HiOutlinePencil />Edit</EditButton>
        </TitleRow>
        <Card>
          <Fields>
            <Field label="Status"><StatusBadge>Completed</StatusBadge></Field>
            <Field label="Scheduled start time">September 11, 2025, 12:49 AM</Field>
            <Field label="Scheduled end time">September 11, 2025, 2:49 AM</Field>
            <Field label="Company">Strosin and Sons</Field>
            <Field label="Driver">Talon Wyatt</Field>
            <Field label="Vehicle">Asperiores incididun</Field>
          </Fields>
          <LocationField>
            <FieldLabel>Location</FieldLabel>
            <MapFrame>
              <TownMap />
              <MarkerPin />
              <ZoomControl>
                <ZoomButton>+</ZoomButton>
                <ZoomButton>−</ZoomButton>
              </ZoomControl>
              <Attribution>
                <svg viewBox="0 0 12 8">
                  <path fill="#4c7be1" d="M0 0h12v4H0z" />
                  <path fill="#ffd500" d="M0 4h12v3H0z" />
                  <path fill="#e0bc00" d="M0 7h12v1H0z" />
                </svg>
                <span><a>Leaflet</a>{' | © OpenStreetMap contributors'}</span>
              </Attribution>
            </MapFrame>
          </LocationField>
        </Card>
      </Main>
    </Page>
  );
}
